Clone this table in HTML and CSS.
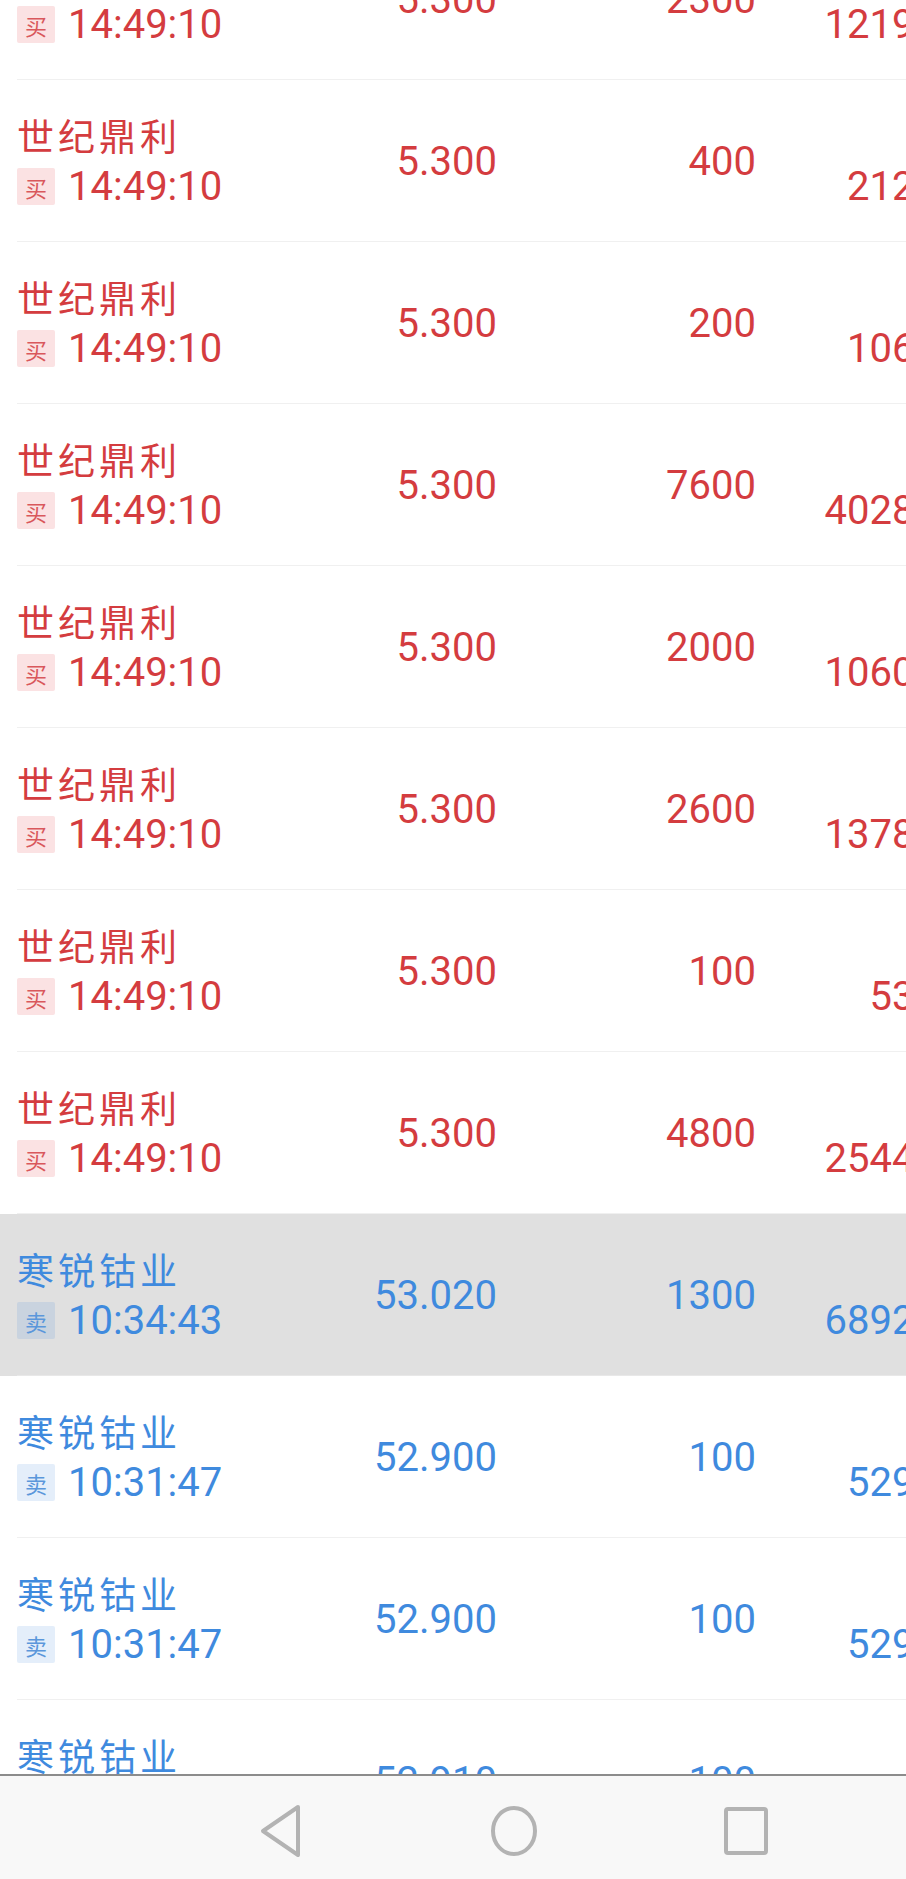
FILE: index.html
```html
<!DOCTYPE html>
<html lang="zh-CN">
<head>
<meta charset="utf-8">
<title>成交明细</title>
<link rel="stylesheet" href="styles.css">
</head>
<body>
<div class="screen">
  <div class="list">
    <div class="rows">
      <div class="row up"><div class="cells">
        <div class="name">世纪鼎利</div>
        <div class="time"><span class="badge">买</span><span>14:49:10</span></div>
        <div class="price">5.300</div><div class="vol">2300</div><div class="amt">12190</div>
      </div></div>
      <div class="row up"><div class="cells">
        <div class="name">世纪鼎利</div>
        <div class="time"><span class="badge">买</span><span>14:49:10</span></div>
        <div class="price">5.300</div><div class="vol">400</div><div class="amt">2120</div>
      </div></div>
      <div class="row up"><div class="cells">
        <div class="name">世纪鼎利</div>
        <div class="time"><span class="badge">买</span><span>14:49:10</span></div>
        <div class="price">5.300</div><div class="vol">200</div><div class="amt">1060</div>
      </div></div>
      <div class="row up"><div class="cells">
        <div class="name">世纪鼎利</div>
        <div class="time"><span class="badge">买</span><span>14:49:10</span></div>
        <div class="price">5.300</div><div class="vol">7600</div><div class="amt">40280</div>
      </div></div>
      <div class="row up"><div class="cells">
        <div class="name">世纪鼎利</div>
        <div class="time"><span class="badge">买</span><span>14:49:10</span></div>
        <div class="price">5.300</div><div class="vol">2000</div><div class="amt">10600</div>
      </div></div>
      <div class="row up"><div class="cells">
        <div class="name">世纪鼎利</div>
        <div class="time"><span class="badge">买</span><span>14:49:10</span></div>
        <div class="price">5.300</div><div class="vol">2600</div><div class="amt">13780</div>
      </div></div>
      <div class="row up"><div class="cells">
        <div class="name">世纪鼎利</div>
        <div class="time"><span class="badge">买</span><span>14:49:10</span></div>
        <div class="price">5.300</div><div class="vol">100</div><div class="amt">530</div>
      </div></div>
      <div class="row up"><div class="cells">
        <div class="name">世纪鼎利</div>
        <div class="time"><span class="badge">买</span><span>14:49:10</span></div>
        <div class="price">5.300</div><div class="vol">4800</div><div class="amt">25440</div>
      </div></div>
      <div class="row down active"><div class="cells">
        <div class="name">寒锐钴业</div>
        <div class="time"><span class="badge">卖</span><span>10:34:43</span></div>
        <div class="price">53.020</div><div class="vol">1300</div><div class="amt">68926</div>
      </div></div>
      <div class="row down"><div class="cells">
        <div class="name">寒锐钴业</div>
        <div class="time"><span class="badge">卖</span><span>10:31:47</span></div>
        <div class="price">52.900</div><div class="vol">100</div><div class="amt">5290</div>
      </div></div>
      <div class="row down"><div class="cells">
        <div class="name">寒锐钴业</div>
        <div class="time"><span class="badge">卖</span><span>10:31:47</span></div>
        <div class="price">52.900</div><div class="vol">100</div><div class="amt">5290</div>
      </div></div>
      <div class="row down"><div class="cells">
        <div class="name">寒锐钴业</div>
        <div class="time"><span class="badge">卖</span><span>10:31:47</span></div>
        <div class="price">52.910</div><div class="vol">100</div><div class="amt">5291</div>
      </div></div>
    </div>
  </div>
  <div class="nav">
    <svg class="nav-back" width="44" height="54" viewBox="0 0 44 54"><path d="M38 3 L3 27 L38 51 Z" fill="none" stroke="#b3b3b3" stroke-width="4" stroke-linejoin="round"/></svg>
    <svg class="nav-home" width="48" height="54" viewBox="0 0 48 54"><ellipse cx="24" cy="27" rx="21" ry="23" fill="none" stroke="#b3b3b3" stroke-width="4"/></svg>
    <svg class="nav-recent" width="44" height="48" viewBox="0 0 44 48"><rect x="2" y="2" width="40" height="44" rx="2" fill="none" stroke="#b3b3b3" stroke-width="4"/></svg>
  </div>
</div>
</body>
</html>
```
FILE: styles.css
```css
html, body {
  margin: 0;
  padding: 0;
  background: #ffffff;
}
body {
  width: 906px;
  height: 1879px;
  overflow: hidden;
  font-family: Roboto, "Noto Sans CJK SC", sans-serif;
}
.screen {
  display: flex;
  flex-direction: column;
  height: 1879px;
}
.list {
  flex: 1;
  overflow: hidden;
}
.rows {
  margin-top: -82px;
}
.row {
  padding-left: 17px;
}
.row.active {
  background: #e0e0e0;
}
.cells {
  display: grid;
  grid-template-columns: 273px 207px 259px 181px;
  grid-template-rows: auto auto;
  align-content: center;
  height: 161px;
  border-bottom: 1px solid #f0f0f0;
}
.row.active .cells {
  border-bottom-color: #e8e8e8;
}
.up { color: #d43c3f; }
.down { color: #3f8ade; }
.name {
  grid-column: 1;
  grid-row: 1;
  font-family: "Noto Sans CJK SC", sans-serif;
  font-size: 37px;
  line-height: 44px;
  letter-spacing: 4px;
  white-space: nowrap;
}
.time {
  grid-column: 1;
  grid-row: 2;
  display: flex;
  align-items: center;
  gap: 13px;
  margin-top: 8px;
  font-size: 40px;
  line-height: 44px;
  white-space: nowrap;
}
.badge {
  display: flex;
  align-items: center;
  justify-content: center;
  width: 38px;
  height: 37px;
  font-family: "Noto Sans CJK SC", sans-serif;
  font-size: 22px;
  line-height: 1;
  border-radius: 2px;
}
.up .badge {
  background: #fbe2e3;
  color: #d9585c;
}
.down .badge {
  background: rgba(63, 138, 222, 0.14);
  color: #5b97db;
}
.price {
  grid-column: 2;
  grid-row: 1 / span 2;
  align-self: center;
  margin-top: 3px;
  text-align: right;
  font-size: 40px;
  line-height: 44px;
}
.vol {
  grid-column: 3;
  grid-row: 1 / span 2;
  align-self: center;
  margin-top: 3px;
  text-align: right;
  font-size: 40px;
  line-height: 44px;
}
.amt {
  grid-column: 4;
  grid-row: 2;
  align-self: center;
  margin-top: 8px;
  text-align: right;
  font-size: 40px;
  line-height: 44px;
  white-space: nowrap;
}
.nav {
  flex: 0 0 105px;
  box-sizing: border-box;
  border-top: 2px solid #8c8c8c;
  background: #f8f8f8;
  display: flex;
  align-items: center;
  gap: 186px;
  padding-left: 260px;
  padding-top: 7px;
}
.nav svg {
  display: block;
}
```
